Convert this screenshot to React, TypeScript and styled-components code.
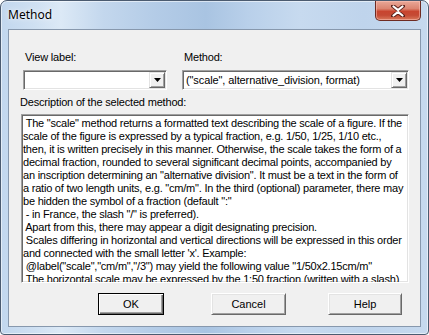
import React from 'react';
import styled, { createGlobalStyle } from 'styled-components';

const GlobalStyle = createGlobalStyle`
  html, body {
    margin: 0;
    padding: 0;
    background: #ffffff;
  }
  body {
    font-family: "Liberation Sans", Arial, sans-serif;
  }
`;

const Window = styled.div`
  box-sizing: border-box;
  width: 429px;
  height: 335px;
  border: 1px solid #4b5b70;
  border-radius: 7px 7px 4px 4px;
  padding: 0 7px 7px;
  display: flex;
  flex-direction: column;
  background: linear-gradient(
    90deg,
    #c2d7ee 0%,
    #cfe0f2 8%,
    #dce9f6 14%,
    #c3d7ed 24%,
    #b4cce7 36%,
    #a9c4e2 48%,
    #b9d0ea 58%,
    #c7daef 70%,
    #bfd4ec 85%,
    #c6d9ee 100%
  );
  box-shadow: inset 0 0 0 1px rgba(255, 255, 255, 0.55);
`;

const TitleBar = styled.div`
  height: 28px;
  display: flex;
  align-items: flex-start;
`;

const Title = styled.span`
  margin-top: 6px;
  font-family: "Noto Sans", "Open Sans", sans-serif;
  font-size: 12px;
  line-height: 16px;
  color: #000;
  text-shadow: 0 0 6px rgba(255, 255, 255, 0.9), 0 0 2px rgba(255, 255, 255, 0.9);
`;

const CloseButton = styled.div`
  margin-left: auto;
  box-sizing: border-box;
  width: 46px;
  height: 20px;
  border: 1px solid #6e2b22;
  border-top: none;
  border-radius: 0 0 5px 5px;
  background: linear-gradient(
    180deg,
    #e9a898 0%,
    #dc8571 40%,
    #c8452f 55%,
    #c54a34 75%,
    #d97a5c 100%
  );
  box-shadow: inset 0 0 0 1px rgba(255, 200, 190, 0.5);
  display: flex;
  align-items: center;
  justify-content: center;
`;

const Client = styled.div`
  flex: 1;
  box-sizing: border-box;
  background: #f0f0f0;
  border: 1px solid #8798ad;
  padding: 21px 11px 0 12px;
  display: flex;
  flex-direction: column;
  font-size: 11px;
  letter-spacing: -0.18px;
`;

const Fields = styled.div`
  display: grid;
  grid-template-columns: 144px 227px;
  column-gap: 15px;
  margin-left: 2px;
`;

const Field = styled.div`
  display: flex;
  flex-direction: column;
`;

const Label = styled.span`
  line-height: 13px;
  color: #000;
  padding-left: 2px;
  margin-bottom: 6px;
`;

const Combo = styled.div`
  box-sizing: border-box;
  height: 20px;
  background: #ffffff;
  border: 1px solid;
  border-color: #a0a0a0 #ffffff #ffffff #a0a0a0;
  box-shadow: inset 1px 1px 0 #696969, inset -1px -1px 0 #e3e3e3;
  display: flex;
  align-items: center;
  padding: 1px;
`;

const ComboText = styled.span`
  flex: 1;
  line-height: 13px;
  padding-left: 2px;
  letter-spacing: -0.1px;
  white-space: nowrap;
  overflow: hidden;
  color: #000;
`;

const DropButton = styled.div`
  box-sizing: border-box;
  width: 16px;
  height: 16px;
  background: #f0f0f0;
  border: 1px solid;
  border-color: #e3e3e3 #696969 #696969 #e3e3e3;
  box-shadow: inset 1px 1px 0 #ffffff, inset -1px -1px 0 #a0a0a0;
  display: flex;
  align-items: center;
  justify-content: center;
`;

const DescLabel = styled.span`
  line-height: 13px;
  color: #000;
  margin: 6px 0 5px -1px;
`;

const DescBox = styled.div`
  box-sizing: border-box;
  width: 388px;
  height: 169px;
  background: #ffffff;
  border: 1px solid;
  border-color: #a0a0a0 #ffffff #ffffff #a0a0a0;
  box-shadow: inset 1px 1px 0 #696969, inset -1px -1px 0 #e3e3e3;
  padding: 2px 1px 0 1px;
  overflow: hidden;
`;

const DescLine = styled.div`
  line-height: 13px;
  letter-spacing: -0.22px;
  white-space: pre;
  color: #000;
`;

const ButtonRow = styled.div`
  display: flex;
  margin-top: 10px;
  padding-left: 65px;
`;

const PushButton = styled.div<{ $width: number; $gap: number; $default?: boolean }>`
  box-sizing: border-box;
  width: ${p => p.$width}px;
  height: 22px;
  margin-left: ${p => p.$gap}px;
  background: #f0f0f0;
  border: 1px solid;
  border-color: ${p => (p.$default ? '#000 #000 #000 #000' : '#ffffff #696969 #696969 #ffffff')};
  box-shadow: ${p =>
    p.$default
      ? 'inset 1px 1px 0 #ffffff, inset -1px -1px 0 #696969, inset -2px -2px 0 #a0a0a0'
      : 'inset 1px 1px 0 #e3e3e3, inset -1px -1px 0 #a0a0a0'};
  display: flex;
  align-items: center;
  justify-content: center;
  color: #000;
  letter-spacing: 0;
`;

const description = [
  ' The "scale" method returns a formatted text describing the scale of a figure. If the',
  'scale of the figure is expressed by a typical fraction, e.g. 1/50, 1/25, 1/10 etc.,',
  'then, it is written precisely in this manner. Otherwise, the scale takes the form of a',
  'decimal fraction, rounded to several significant decimal points, accompanied by',
  'an inscription determining an "alternative division". It must be a text in the form of',
  'a ratio of two length units, e.g. "cm/m". In the third (optional) parameter, there may',
  'be hidden the symbol of a fraction (default ":"',
  ' - in France, the slash "/" is preferred).',
  ' Apart from this, there may appear a digit designating precision.',
  ' Scales differing in horizontal and vertical directions will be expressed in this order',
  "and connected with the small letter 'x'. Example:",
  ' @label("scale","cm/m","/3") may yield the following value "1/50x2.15cm/m"',
  ' The horizontal scale may be expressed by the 1:50 fraction (written with a slash)',
];

function DownArrow() {
  return (
    <svg width="7" height="4" viewBox="0 0 7 4">
      <path d="M0 0H7L3.5 4Z" fill="#000" />
    </svg>
  );
}

function CloseGlyph() {
  return (
    <svg width="14" height="12" viewBox="0 0 14 12">
      <path
        d="M2 1L7 5L12 1M2 11L7 7L12 11"
        stroke="#5a2019"
        strokeWidth="4"
        strokeLinecap="round"
        fill="none"
      />
      <path
        d="M2.5 1.5L7 5.2L11.5 1.5M2.5 10.5L7 6.8L11.5 10.5"
        stroke="#ffffff"
        strokeWidth="2.2"
        strokeLinecap="round"
        fill="none"
      />
    </svg>
  );
}

export default function App() {
  return (
    <>
      <GlobalStyle />
      <Window>
        <TitleBar>
          <Title>Method</Title>
          <CloseButton>
            <CloseGlyph />
          </CloseButton>
        </TitleBar>
        <Client>
          <Fields>
            <Field>
              <Label>View label:</Label>
              <Combo>
                <ComboText></ComboText>
                <DropButton>
                  <DownArrow />
                </DropButton>
              </Combo>
            </Field>
            <Field>
              <Label>Method:</Label>
              <Combo>
                <ComboText>("scale", alternative_division, format)</ComboText>
                <DropButton>
                  <DownArrow />
                </DropButton>
              </Combo>
            </Field>
          </Fields>
          <DescLabel>Description of the selected method:</DescLabel>
          <DescBox>
            {description.map((line, i) => (
              <DescLine key={i}>{line}</DescLine>
            ))}
          </DescBox>
          <ButtonRow>
            <PushButton $width={66} $gap={12} $default>OK</PushButton>
            <PushButton $width={75} $gap={47}>Cancel</PushButton>
            <PushButton $width={74} $gap={42}>Help</PushButton>
          </ButtonRow>
        </Client>
      </Window>
    </>
  );
}
